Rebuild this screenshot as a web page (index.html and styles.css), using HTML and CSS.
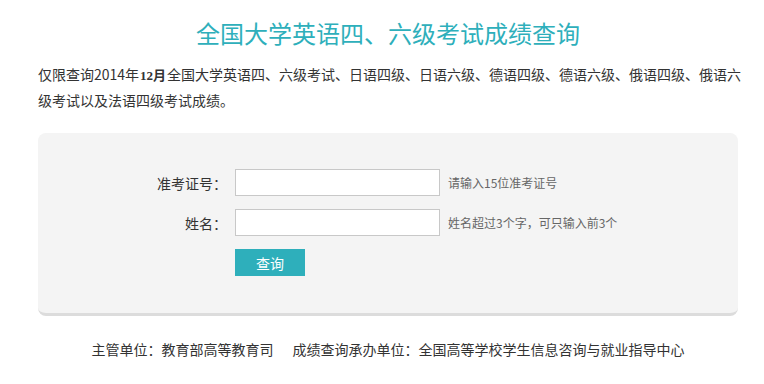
FILE: index.html
```html
<!DOCTYPE html>
<html lang="zh-CN">
<head>
<meta charset="utf-8">
<title>全国大学英语四、六级考试成绩查询</title>
<link rel="stylesheet" href="styles.css">
</head>
<body>
<div class="page">
  <h1 class="title">全国大学英语四、六级考试成绩查询</h1>
  <p class="desc"><span>仅限查询2014年</span><b class="em">12月</b><span>全国大学英语四、六级考试、日语四级、日语六级、德语四级、德语六级、俄语四级、俄语六级考试以及法语四级考试成绩。</span></p>
  <form class="panel">
    <div class="row">
      <label class="label" for="zkzh">准考证号：</label>
      <input class="field" id="zkzh" type="text">
      <span class="hint">请输入15位准考证号</span>
    </div>
    <div class="row">
      <label class="label" for="xm">姓名：</label>
      <input class="field" id="xm" type="text">
      <span class="hint">姓名超过3个字，可只输入前3个</span>
    </div>
    <div class="row">
      <span class="label"></span>
      <button class="btn" type="button">查询</button>
    </div>
  </form>
  <div class="footer">
    <span>主管单位：教育部高等教育司</span>
    <span class="footer-gap">成绩查询承办单位：全国高等学校学生信息咨询与就业指导中心</span>
  </div>
</div>
</body>
</html>
```

FILE: styles.css
```css
html, body {
  margin: 0;
  padding: 0;
  background: #fff;
}
body {
  font-family: "Noto Sans CJK SC", "Microsoft YaHei", sans-serif;
  color: #333;
  font-size: 14px;
}
.page {
  width: 700px;
  margin-left: 38px;
  padding-top: 17px;
}
.title {
  margin: 0;
  font-size: 24px;
  line-height: 32px;
  font-weight: normal;
  color: #2eafbb;
  text-align: center;
}
.desc {
  margin: 13px -10px 0 0;
  font-size: 14px;
  line-height: 25px;
}
.em {
  display: inline-block;
  font-family: "Liberation Serif", "Noto Sans CJK SC", serif;
  font-size: 13px;
  line-height: 25px;
  padding: 0 1px;
}
.panel {
  margin-top: 20px;
  background: #f4f4f4;
  border-radius: 8px;
  border-bottom: 3px solid #dcdcdc;
  padding: 36px 0 37px;
  display: flex;
  flex-direction: column;
  gap: 13px;
}
.row {
  display: flex;
  align-items: center;
}
.label {
  width: 189px;
  flex: none;
  text-align: right;
  font-size: 14px;
  color: #333;
  margin-right: 8px;
}
.field {
  box-sizing: border-box;
  width: 205px;
  height: 27px;
  margin: 0;
  border: 1px solid #c8c8c8;
  background: #fff;
  padding: 0 6px;
  outline: none;
}
.hint {
  margin-left: 8px;
  font-size: 12px;
  color: #666;
}
.btn {
  width: 70px;
  height: 27px;
  border: 0;
  margin: 0;
  padding: 0;
  background: #2eafbb;
  color: #fff;
  font-family: inherit;
  font-size: 14px;
  cursor: pointer;
}
.footer {
  margin-top: 23px;
  line-height: 20px;
  text-align: center;
  font-size: 14px;
  color: #333;
}
.footer-gap {
  margin-left: 16px;
}
```
